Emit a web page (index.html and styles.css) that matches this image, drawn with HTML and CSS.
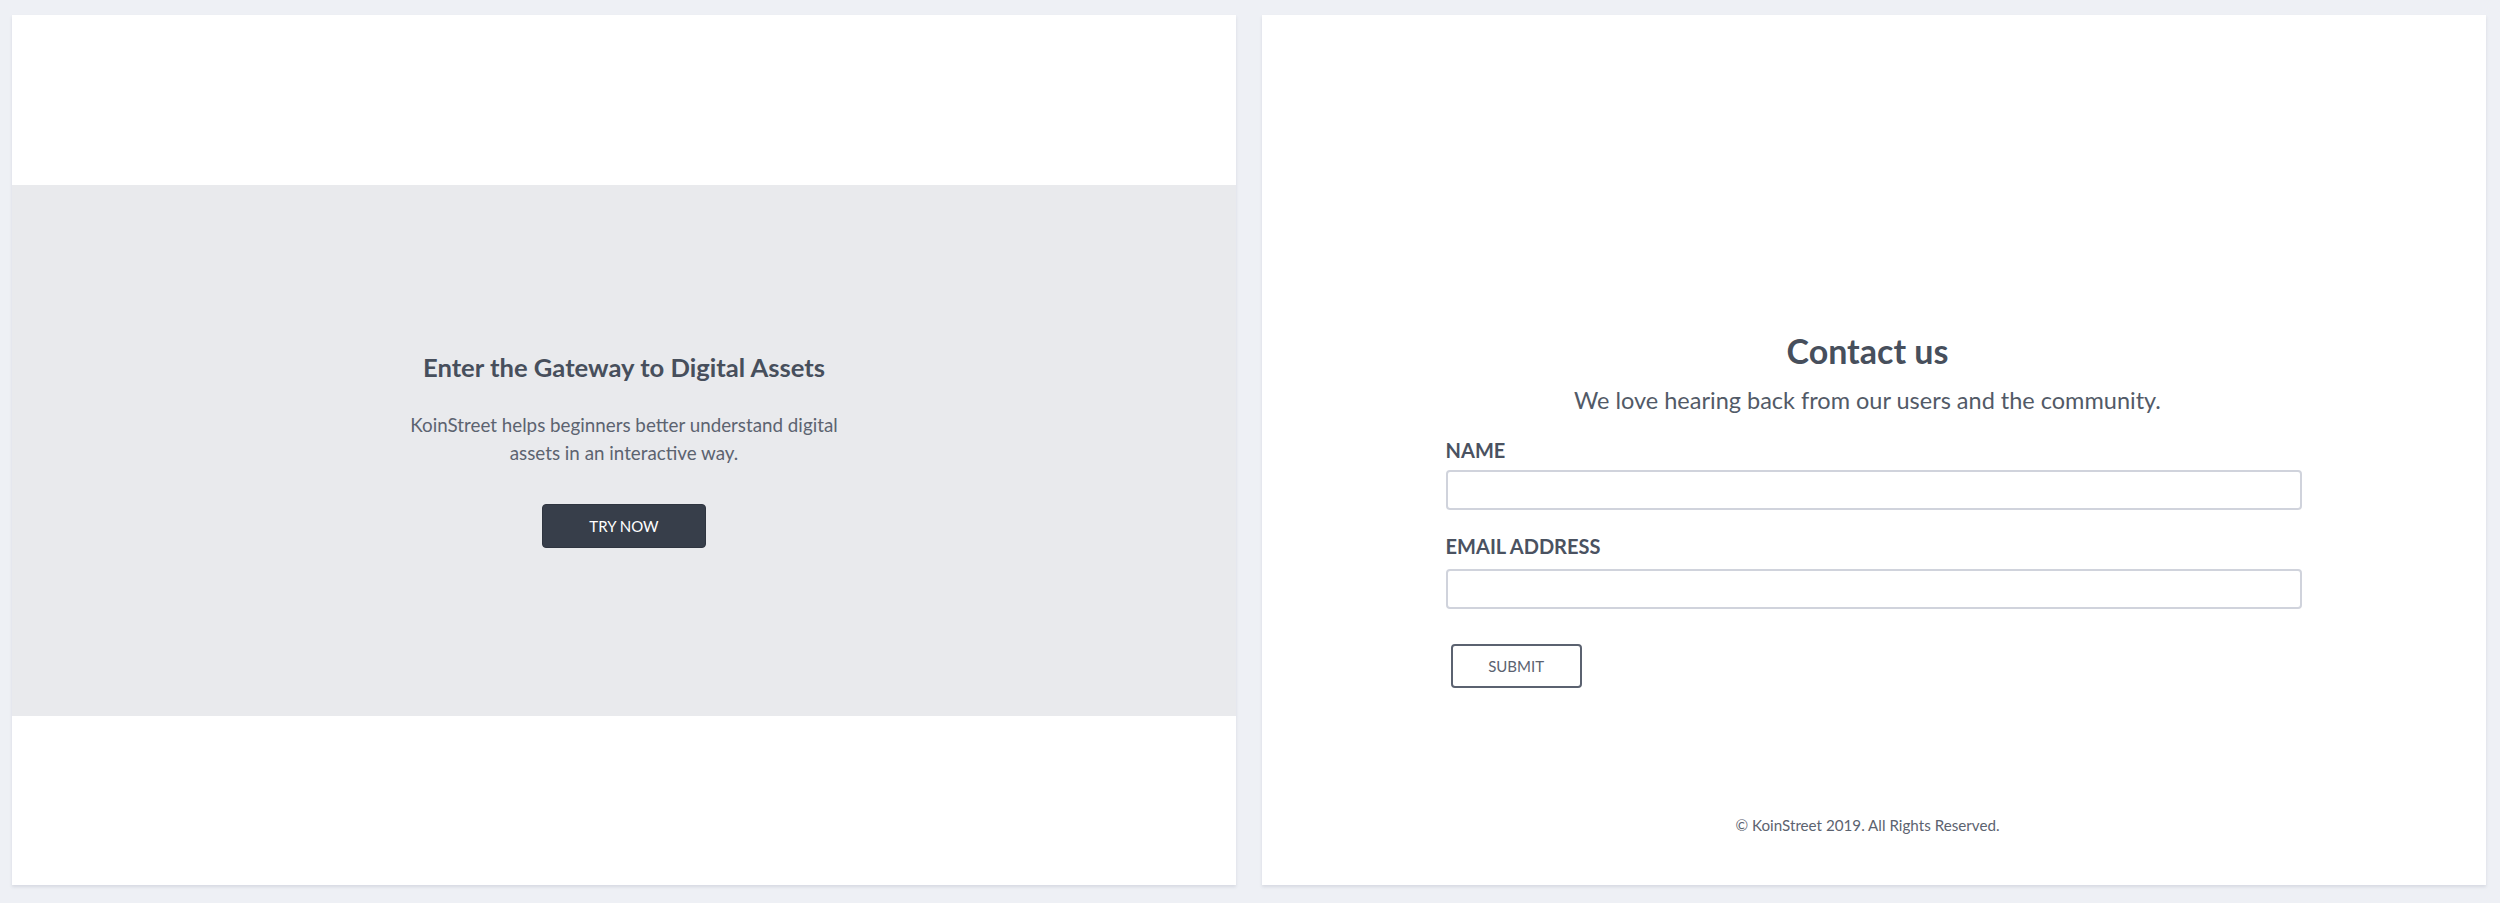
FILE: index.html
```html
<!DOCTYPE html>
<html lang="en">
<head>
<meta charset="utf-8">
<title>KoinStreet</title>
<link rel="stylesheet" href="styles.css">
</head>
<body>
<main class="page">
  <section class="card card-hero">
    <div class="hero">
      <h1 class="hero-title">Enter the Gateway to Digital Assets</h1>
      <p class="hero-text">KoinStreet helps beginners better understand digital assets in an interactive way.</p>
      <button class="btn-primary" type="button">TRY NOW</button>
    </div>
  </section>
  <section class="card card-contact">
    <div class="contact">
      <h2 class="contact-title">Contact us</h2>
      <p class="contact-sub">We love hearing back from our users and the community.</p>
      <form class="form">
        <div class="field">
          <label class="field-label" for="name">NAME</label>
          <input class="field-input" id="name" type="text">
        </div>
        <div class="field">
          <label class="field-label field-label-email" for="email">EMAIL ADDRESS</label>
          <input class="field-input" id="email" type="email">
        </div>
        <button class="btn-outline" type="button">SUBMIT</button>
      </form>
    </div>
    <footer class="footer">© KoinStreet 2019. All Rights Reserved.</footer>
  </section>
</main>
</body>
</html>
```
FILE: styles.css
```css
* {
  box-sizing: border-box;
}

html, body {
  margin: 0;
  padding: 0;
}

body {
  background: #eef0f5;
  font-family: "Lato", "Open Sans", "Liberation Sans", sans-serif;
  color: #4a5260;
}

.page {
  height: 903px;
  padding: 15px 14px 18px 12px;
  display: grid;
  grid-template-columns: 1fr 1fr;
  gap: 26px;
}

.card {
  background: #ffffff;
  box-shadow: 0 2px 3px rgba(50, 60, 90, 0.12);
  display: flex;
  flex-direction: column;
}

.card-hero {
  justify-content: center;
}

.hero {
  height: 531px;
  background: #e9eaed;
  display: flex;
  flex-direction: column;
  align-items: center;
  justify-content: center;
  text-align: center;
}

.hero-title {
  margin: 0;
  font-size: 25.6px;
  font-weight: 700;
  line-height: 1.2;
  color: #474f5c;
}

.hero-text {
  margin: 28px 0 0;
  max-width: 460px;
  font-size: 18.8px;
  line-height: 28px;
  color: #5c6370;
}

.btn-primary {
  margin-top: 37px;
  width: 164px;
  height: 44px;
  border: 1px solid #2f3540;
  border-radius: 4px;
  background: #373e4a;
  color: #ffffff;
  font-family: inherit;
  font-size: 15px;
  cursor: pointer;
}

.card-contact {
  padding: 316px 0 51px;
  align-items: center;
}

.contact {
  width: 70%;
  display: flex;
  flex-direction: column;
}

.contact-title {
  margin: 0;
  padding-right: 13px;
  text-align: center;
  font-size: 34px;
  font-weight: 700;
  line-height: 1.2;
  color: #474f5c;
}

.contact-sub {
  margin: 14px 0 0;
  padding-right: 13px;
  text-align: center;
  font-size: 23.5px;
  line-height: 1.2;
  color: #525a67;
}

.form {
  margin-top: 24px;
  display: flex;
  flex-direction: column;
  align-items: flex-start;
}

.field {
  width: 100%;
  display: flex;
  flex-direction: column;
  margin-bottom: 24px;
}

.field:last-of-type {
  margin-bottom: 35px;
}

.field-label {
  font-size: 20px;
  font-weight: 700;
  line-height: 24px;
  margin-bottom: 8px;
  color: #4a5261;
}

.field-label-email {
  margin-bottom: 11px;
}

.field-input {
  width: 100%;
  height: 40px;
  border: 2px solid #d0d3dc;
  border-radius: 4px;
  background: #ffffff;
  font-family: inherit;
  font-size: 16px;
  padding: 0 10px;
}

.btn-outline {
  margin-left: 5px;
  width: 131px;
  height: 44px;
  border: 2px solid #5b6270;
  border-radius: 4px;
  background: #ffffff;
  color: #5b6270;
  font-family: inherit;
  font-size: 15px;
  cursor: pointer;
}

.footer {
  margin-top: auto;
  padding-right: 13px;
  font-size: 15.2px;
  line-height: 17px;
  color: #5c6370;
  text-align: center;
}
```
